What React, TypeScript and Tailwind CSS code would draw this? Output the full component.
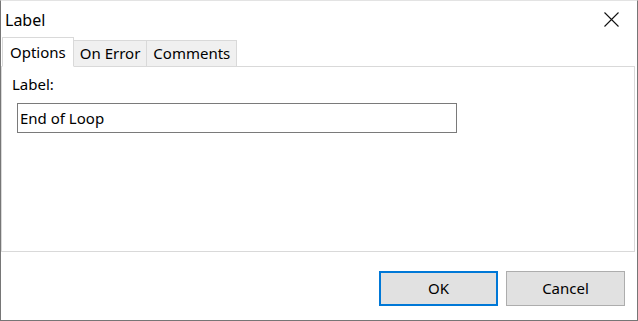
import React from 'react';

const tabs = ['Options', 'On Error', 'Comments'];

export default function App() {
  const active = 0;

  return (
    <div className="w-[638px] h-[321px] bg-white border border-[#767676] border-t-[#e3e3e3] flex flex-col font-['Segoe_UI','Noto_Sans',sans-serif] text-[15px] text-black overflow-hidden">
      {/* title bar */}
      <div className="h-[35px] flex items-center justify-between pl-[4px] pr-[18px] shrink-0">
        <span className="text-[16px] leading-none mt-[2px]">Label</span>
        <svg width="15" height="15" viewBox="0 0 15 15" className="mt-[1px]">
          <path d="M0.5 0.5 L14.5 14.5 M14.5 0.5 L0.5 14.5" stroke="#111" strokeWidth="1.1" fill="none" />
        </svg>
      </div>

      {/* tabs */}
      <div className="flex items-end pl-[1px] h-[30px] shrink-0 relative z-10">
        {tabs.map((t, i) =>
          i === active ? (
            <div
              key={t}
              className="h-[30px] px-[7px] bg-white border border-[#d9d9d9] border-b-white flex items-center leading-none -mb-px"
            >
              {t}
            </div>
          ) : (
            <div
              key={t}
              className="h-[26px] px-[6px] bg-[#f0f0f0] border border-[#d9d9d9] border-b-0 -ml-px flex items-center leading-none"
            >
              {t}
            </div>
          )
        )}
      </div>

      {/* panel */}
      <div className="h-[186px] mr-[2px] border border-[#d9d9d9] shrink-0 pl-[10px] pt-[10px]">
        <div className="leading-none">Label:</div>
        <div className="mt-[11px] ml-[5px] w-[440px] h-[30px] border border-[#7a7a7a] flex items-center pl-[2px] leading-none">
          End of Loop
        </div>
      </div>

      {/* buttons */}
      <div className="flex justify-end gap-[8px] pr-[12px] pt-[19px]">
        <button className="w-[119px] h-[35px] bg-[#e1e1e1] border-2 border-[#0078d7] leading-none">OK</button>
        <button className="w-[119px] h-[35px] bg-[#e1e1e1] border border-[#adadad] leading-none">Cancel</button>
      </div>
    </div>
  );
}
